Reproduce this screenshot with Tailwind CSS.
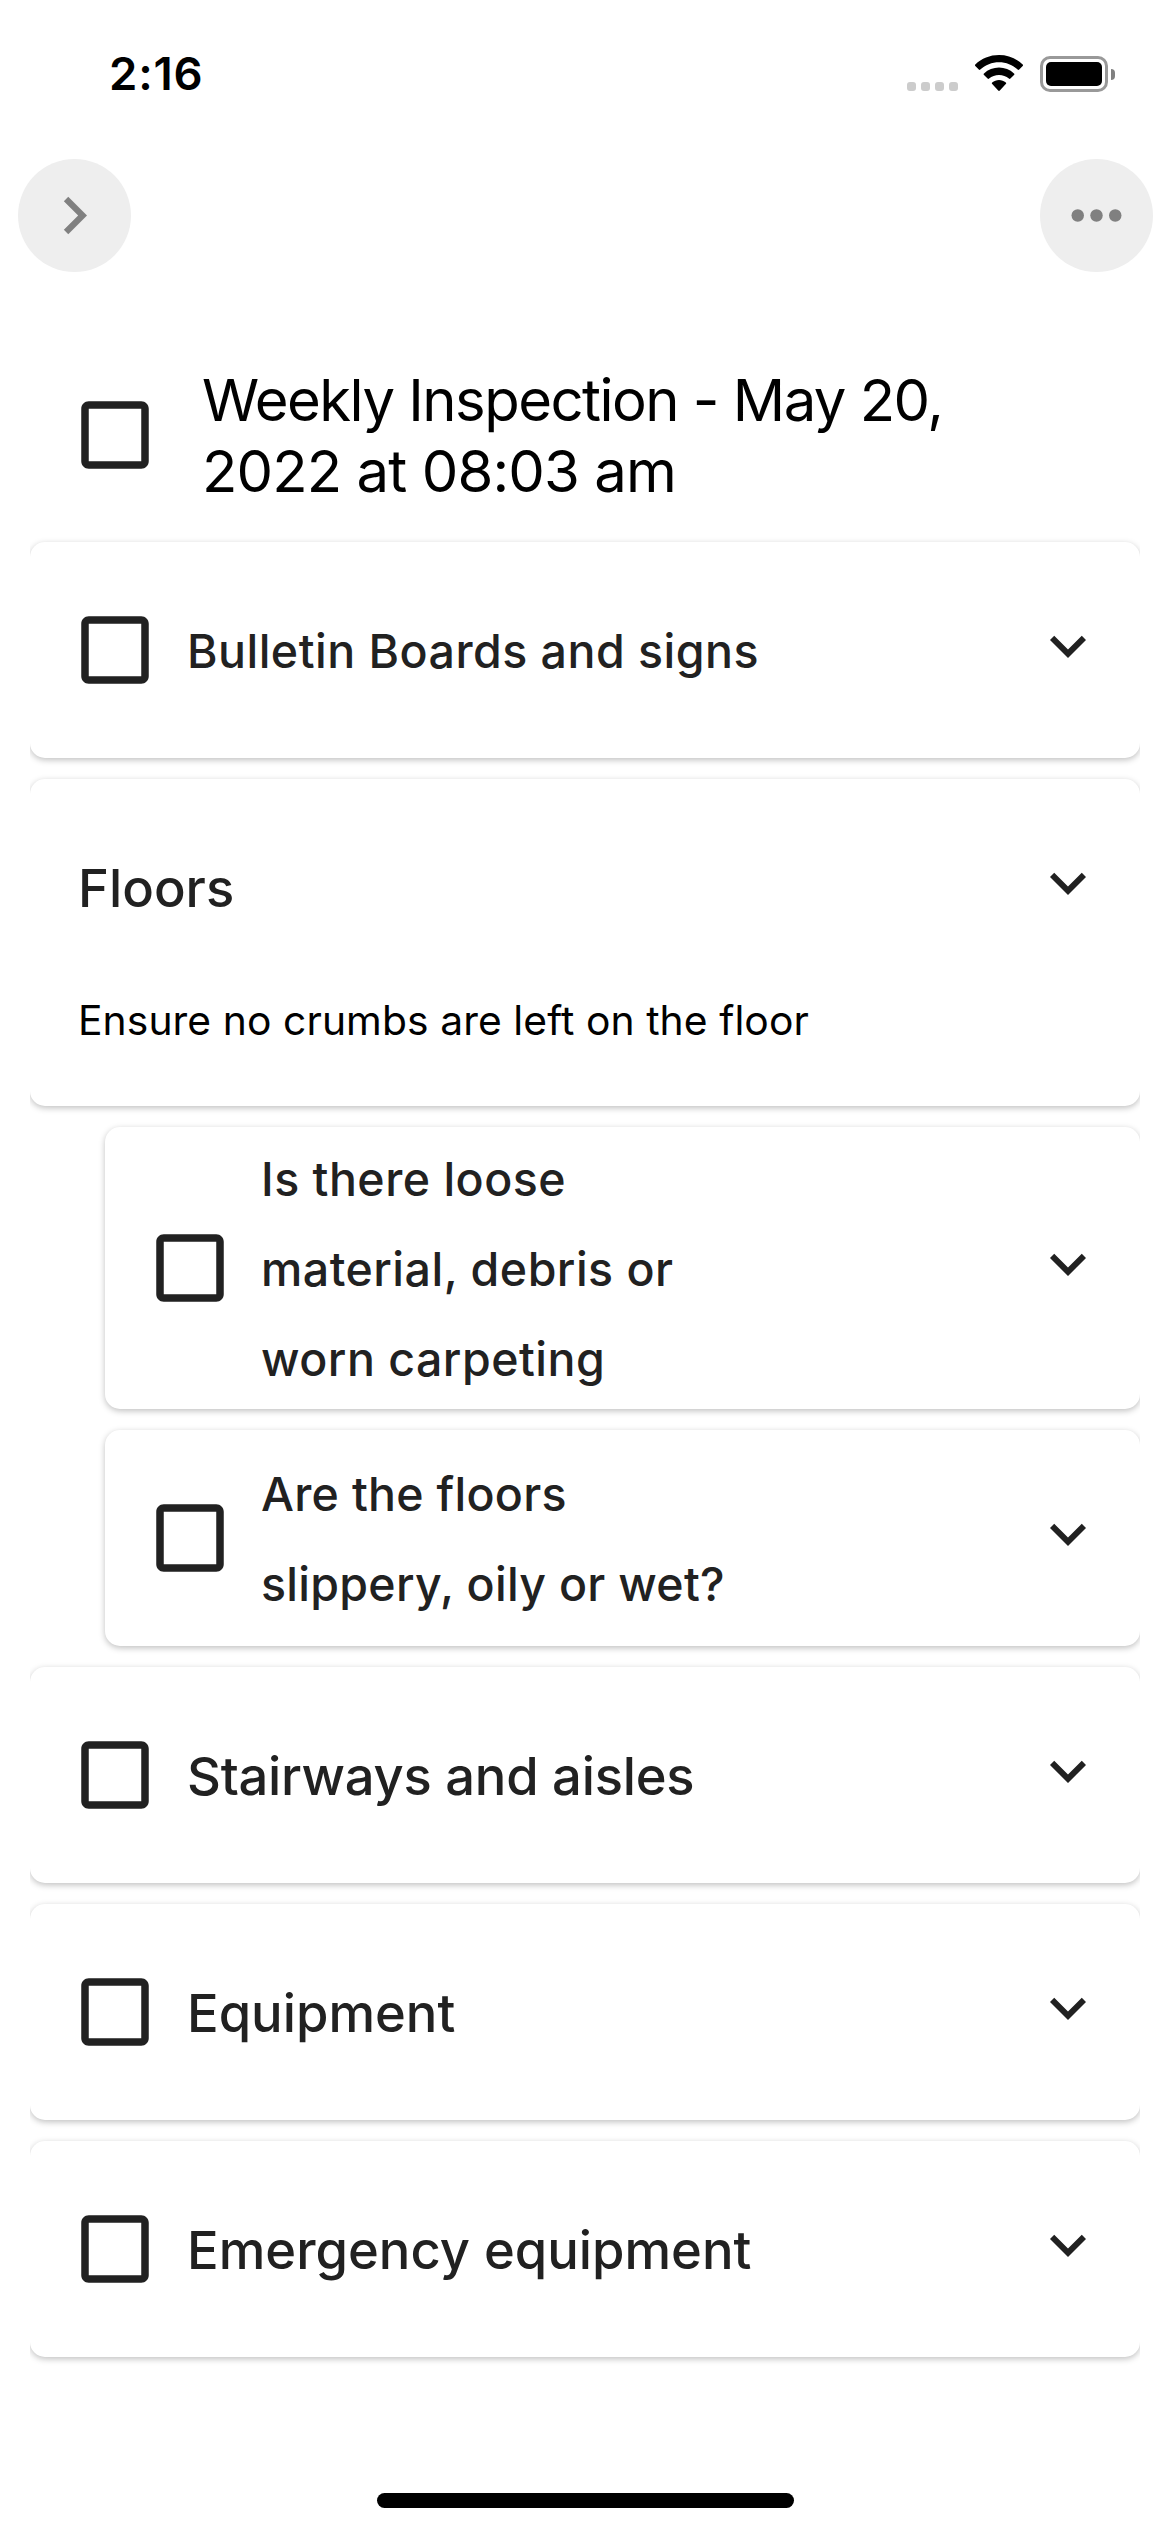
<!DOCTYPE html>
<html lang="en">
<head>
<meta charset="utf-8">
<title>Weekly Inspection</title>
<script src="https://cdn.jsdelivr.net/npm/@tailwindcss/browser@4"></script>
</head>
<body class="bg-white font-['Inter',sans-serif]">
<svg class="hidden">
  <symbol id="checkbox" viewBox="0 0 24 24"><path d="M19 5v14H5V5h14m0-2H5c-1.1 0-2 .9-2 2v14c0 1.1.9 2 2 2h14c1.1 0 2-.9 2-2V5c0-1.1-.9-2-2-2z"/></symbol>
  <symbol id="expand" viewBox="0 0 24 24"><path d="M16.59 8.59 12 13.17 7.41 8.59 6 10l6 6 6-6z"/></symbol>
</svg>
<div class="flex h-[2532px] w-[1170px] flex-col overflow-hidden bg-white text-[#212121]">

  <!-- Status bar -->
  <header class="flex h-[159px] items-start justify-between pr-[55px] pl-[109px] text-black">
    <span class="mt-[46px] text-[45.5px] leading-[56px] font-semibold tracking-[0.8px]">2:16</span>
    <div class="mt-[55px] flex items-start">
      <div class="mt-[27px] flex gap-[5px]">
        <i class="size-[9px] rounded-[3px] bg-[#cccccc]"></i>
        <i class="size-[9px] rounded-[3px] bg-[#cccccc]"></i>
        <i class="size-[9px] rounded-[3px] bg-[#cccccc]"></i>
        <i class="size-[9px] rounded-[3px] bg-[#cccccc]"></i>
      </div>
      <svg class="ml-[17px] h-[36px] w-[48px]" viewBox="0 0 48 36" fill="#000">
        <path d="M24 0C33 0 41.5 3.4 47.7 9.4c.5.4.5 1 0 1.500l-3.500 3.700c-.4.4-1 .4-1.500 0C37.700 9.900 31 7.300 24 7.300S10.300 9.900 5.300 14.600c-.5.4-1.100.4-1.500 0L.3 10.900c-.5-.5-.5-1.100 0-1.500C6.500 3.400 15 0 24 0z"/>
        <path d="M24 12.600c5.600 0 10.900 2.100 15 5.800.5.4.5 1.100 0 1.500l-3.600 3.700c-.4.4-1 .4-1.500 0-2.700-2.400-6.200-3.700-9.900-3.700s-7.200 1.300-9.900 3.700c-.5.4-1.100.4-1.500 0L9 19.900c-.5-.4-.5-1.100 0-1.500 4.100-3.700 9.400-5.800 15-5.800z"/>
        <path d="M24 25c2.500 0 4.900.9 6.800 2.500.5.4.5 1.100 0 1.600l-6 6.400c-.5.5-1.100.5-1.600 0l-6-6.400c-.5-.5-.5-1.200 0-1.600C19.100 25.900 21.500 25 24 25z"/>
      </svg>
      <div class="mt-px ml-[17px] h-[36px] w-[68px] rounded-[10px] border-[3px] border-[#999999] p-[3px]">
        <div class="h-full w-full rounded-[5px] bg-black"></div>
      </div>
      <div class="mt-[14px] ml-[3px] h-[11px] w-[4px] rounded-r-full bg-[#808080]"></div>
    </div>
  </header>

  <!-- Navigation buttons -->
  <nav class="flex h-[113px] justify-between pr-[17.500px] pl-[18px]">
    <button class="flex size-[113px] items-center justify-center rounded-full bg-[#eeeeee]">
      <svg class="size-[75px]" viewBox="0 0 24 24" fill="#808080"><path d="M10 6 8.590 7.410 13.170 12l-4.580 4.590L10 18l6-6z"/></svg>
    </button>
    <button class="flex size-[113px] items-center justify-center rounded-full bg-[#eeeeee]">
      <svg class="size-[75px]" viewBox="0 0 24 24" fill="#808080"><circle cx="6" cy="12" r="2"/><circle cx="12" cy="12" r="2"/><circle cx="18" cy="12" r="2"/></svg>
    </button>
  </nav>

  <!-- Checklist title -->
  <section class="mt-[92px] flex h-[142px] items-center pl-[70px]">
    <svg class="size-[90px]" fill="currentColor"><use href="#checkbox"/></svg>
    <h1 class="ml-[42px] pt-[2px] text-[58px] leading-[71px] text-black">
      <span class="block tracking-[-1.520px]">Weekly Inspection - May 20,</span>
      <span class="block tracking-[-0.890px]">2022 at 08:03 am</span>
    </h1>
  </section>

  <!-- Sections -->
  <main class="mx-[30px] flex flex-col gap-[21px] overflow-hidden pt-[36px] pb-[20px]">
    <article class="rounded-[15px] bg-white shadow-[0_2px_6px_rgba(0,0,0,0.25)]">
      <div class="flex min-h-[216px] items-center pr-[36px] pl-[40px]">
        <svg class="size-[90px]" fill="currentColor"><use href="#checkbox"/></svg>
        <h2 class="ml-[27px] flex-1 pt-[2px] text-[46.500px] leading-[90px] font-medium tracking-[0.480px]">Bulletin Boards and signs</h2>
        <svg class="-mt-[9px] size-[72px]" fill="currentColor"><use href="#expand"/></svg>
      </div>
    </article>

    <article class="rounded-[15px] bg-white shadow-[0_2px_6px_rgba(0,0,0,0.25)]">
      <div class="flex min-h-[216px] items-center pr-[36px] pl-[48px]">
        <h2 class="flex-1 pt-[2px] text-[52.500px] leading-[90px] font-medium">Floors</h2>
        <svg class="-mt-[9px] size-[72px]" fill="currentColor"><use href="#expand"/></svg>
      </div>
      <p class="pb-[61px] pl-[48px] text-[40.800px] leading-[50px] tracking-[0.080px] text-black">Ensure no crumbs are left on the floor</p>
    </article>

    <article class="ml-[75px] rounded-[15px] bg-white shadow-[0_2px_6px_rgba(0,0,0,0.25)]">
      <div class="flex h-[282px] items-center pr-[36px] pl-[40px]">
        <svg class="size-[90px]" fill="currentColor"><use href="#checkbox"/></svg>
        <h3 class="ml-[26px] flex-1 pt-[2px] text-[46.500px] leading-[90px] font-medium tracking-[0.480px]">Is there loose<br>material, debris or<br>worn carpeting</h3>
        <svg class="-mt-[9px] size-[72px]" fill="currentColor"><use href="#expand"/></svg>
      </div>
    </article>

    <article class="ml-[75px] rounded-[15px] bg-white shadow-[0_2px_6px_rgba(0,0,0,0.25)]">
      <div class="flex h-[216px] items-center pr-[36px] pl-[40px]">
        <svg class="size-[90px]" fill="currentColor"><use href="#checkbox"/></svg>
        <h3 class="ml-[26px] flex-1 pt-[2px] text-[46.500px] leading-[90px] font-medium tracking-[0.280px]">Are the floors<br>slippery, oily or wet?</h3>
        <svg class="-mt-[9px] size-[72px]" fill="currentColor"><use href="#expand"/></svg>
      </div>
    </article>

    <article class="rounded-[15px] bg-white shadow-[0_2px_6px_rgba(0,0,0,0.25)]">
      <div class="flex h-[216px] items-center pr-[36px] pl-[40px]">
        <svg class="size-[90px]" fill="currentColor"><use href="#checkbox"/></svg>
        <h2 class="ml-[27px] flex-1 pt-[2px] text-[52.500px] leading-[90px] font-medium tracking-[-0.250px]">Stairways and aisles</h2>
        <svg class="-mt-[9px] size-[72px]" fill="currentColor"><use href="#expand"/></svg>
      </div>
    </article>

    <article class="rounded-[15px] bg-white shadow-[0_2px_6px_rgba(0,0,0,0.25)]">
      <div class="flex h-[216px] items-center pr-[36px] pl-[40px]">
        <svg class="size-[90px]" fill="currentColor"><use href="#checkbox"/></svg>
        <h2 class="ml-[27px] flex-1 pt-[2px] text-[52.500px] leading-[90px] font-medium">Equipment</h2>
        <svg class="-mt-[9px] size-[72px]" fill="currentColor"><use href="#expand"/></svg>
      </div>
    </article>

    <article class="rounded-[15px] bg-white shadow-[0_2px_6px_rgba(0,0,0,0.25)]">
      <div class="flex h-[216px] items-center pr-[36px] pl-[40px]">
        <svg class="size-[90px]" fill="currentColor"><use href="#checkbox"/></svg>
        <h2 class="ml-[27px] flex-1 pt-[2px] text-[52.500px] leading-[90px] font-medium">Emergency equipment</h2>
        <svg class="-mt-[9px] size-[72px]" fill="currentColor"><use href="#expand"/></svg>
      </div>
    </article>
  </main>

  <!-- Home indicator -->
  <div class="mx-auto mt-auto mb-[24px] h-[15px] w-[417px] shrink-0 rounded-full bg-black"></div>
</div>
</body>
</html>
